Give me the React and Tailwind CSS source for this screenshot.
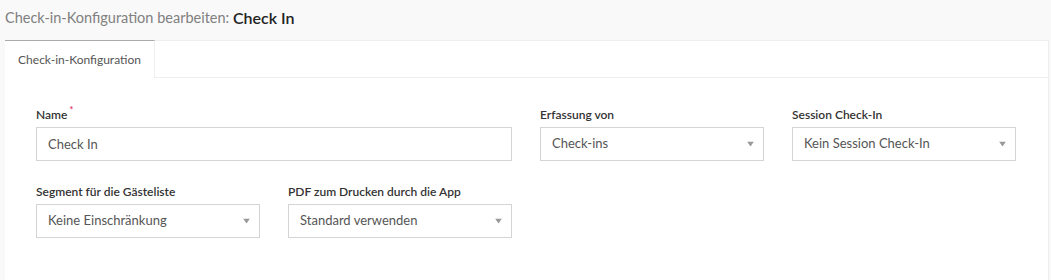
import { useState } from "react";

const font = { fontFamily: "Lato, 'Open Sans', sans-serif" };

const Caret = () => (
  <svg width="7" height="5" viewBox="0 0 7 5" className="absolute right-[9px] top-1/2 -translate-y-1/2">
    <path d="M0 0 L7 0 L3.5 5 Z" fill="#999" />
  </svg>
);

const Field = ({ label, required, children, className = "" }) => (
  <div className={className}>
    <div className="h-[16px] mb-[4px] flex items-start text-[12px] font-semibold text-[#333] leading-[16px]">
      {label}
      {required && <span className="text-[#e0245e] text-[9px] leading-[10px] ml-[2px] -mt-[2px]">*</span>}
    </div>
    {children}
  </div>
);

const SelectBox = ({ value }) => (
  <div className="relative h-[34px] border border-[#d4d4d4] bg-white flex items-center pl-[11px] text-[13px] text-[#555]">
    {value}
    <Caret />
  </div>
);

export default function App() {
  const [name, setName] = useState("Check In");

  return (
    <div className="w-full h-[280px] bg-[#f9f9f9] pl-[5px] pr-[2px] overflow-hidden" style={font}>
      {/* Kopfzeile */}
      <div className="h-[40px] pb-[4px] flex items-center text-[14.5px] text-[#808080]">
        Check-in-Konfiguration bearbeiten:&nbsp;
        <span className="text-[#222] text-[16px] font-semibold">Check In</span>
      </div>

      <div className="bg-white border-r border-[#eee] h-[240px]">
        {/* Tabs */}
        <div className="flex h-[38px]">
          <div className="w-[150px] border-t border-t-[#aaa] border-r border-r-[#eee] flex items-center justify-center text-[12px] text-[#555] bg-white">
            Check-in-Konfiguration
          </div>
          <div className="flex-1 border-t border-b border-[#eee]" />
        </div>

        {/* Formular */}
        <div className="pl-[31px] pr-[32px] pt-[29px] grid grid-cols-4 gap-x-[28px] gap-y-[23px]">
          <Field label="Name" required className="col-span-2">
            <input
              value={name}
              onChange={(e) => setName(e.target.value)}
              className="w-full h-[34px] border border-[#d4d4d4] px-[11px] text-[13px] text-[#555] outline-none"
              style={font}
            />
          </Field>
          <Field label="Erfassung von">
            <SelectBox value="Check-ins" />
          </Field>
          <Field label="Session Check-In">
            <SelectBox value="Kein Session Check-In" />
          </Field>
          <Field label="Segment für die Gästeliste">
            <SelectBox value="Keine Einschränkung" />
          </Field>
          <Field label="PDF zum Drucken durch die App">
            <SelectBox value="Standard verwenden" />
          </Field>
        </div>
      </div>
    </div>
  );
}
